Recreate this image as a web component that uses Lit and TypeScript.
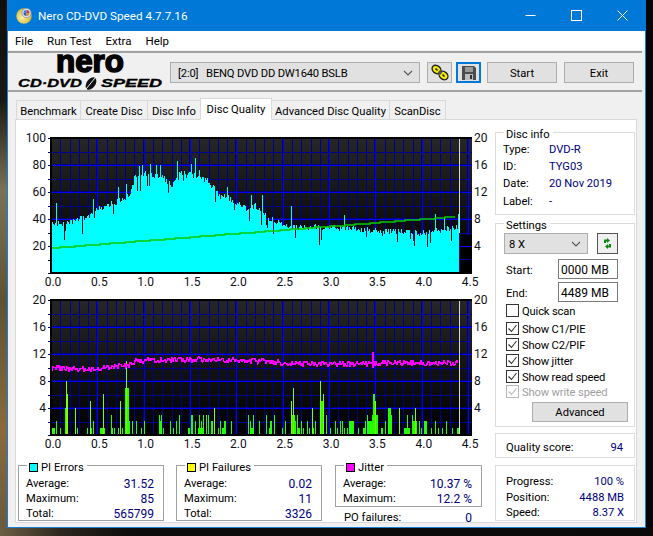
import { LitElement, html, css, svg } from "lit";
import { customElement } from "lit/decorators.js";

const env: [number, number][] = [[0,40],[.1,39],[.2,40],[.3,43],[.4,43],[.5,50],[.6,52],[.7,55],[.8,57],[.85,62],[.9,73],[1,76],[1.1,74],[1.2,73],[1.3,67],[1.37,76],[1.5,76],[1.6,73],[1.7,70],[1.8,60],[1.9,58],[2,55],[2.1,50],[2.2,52],[2.3,45],[2.4,41],[2.5,39],[2.6,36],[2.7,36],[3,36],[3.5,34],[4,32],[4.3,35],[4.4,37]];
const upSpikes: [number, number][] = [[56,52],[93,55],[108,51],[118,64],[126,66],[139,79],[142,80],[150,81],[156,80],[160,80],[177,83],[191,81],[195,85],[199,76],[227,64],[251,58],[262,58],[291,50],[344,43],[435,44],[444,41],[458,44]];
const piBars: [number, number, number][] = [[52,3,1],[56,1,2],[60,1,1],[65,3,4],[66,1,8],[67,1,6],[75,1,4],[77,1,1],[87,1,1],[90,1,5],[91,1,1],[93,1,2],[100,5,1],[103,1,6],[111,1,3],[112,1,1],[114,1,1],[118,1,1],[120,1,5],[122,1,1],[125,4,7],[126,1,11],[129,1,2],[132,1,2],[136,1,2],[141,1,1],[144,1,2],[159,1,3],[160,1,2],[161,1,3],[163,1,1],[170,1,2],[173,1,1],[176,1,2],[179,1,3],[188,2,1],[191,2,3],[195,1,2],[198,5,1],[199,1,3],[201,1,2],[203,1,3],[206,1,3],[208,1,3],[211,1,2],[212,1,2],[214,1,4],[218,1,1],[220,1,2],[222,2,1],[224,2,2],[231,1,2],[248,1,3],[250,1,2],[251,2,1],[253,1,3],[250,4,1],[259,1,2],[266,1,3],[269,1,1],[270,2,2],[274,1,3],[282,1,1],[285,1,2],[291,1,5],[292,3,3],[293,1,7],[294,2,2],[297,1,3],[298,2,1],[301,1,2],[303,1,1],[307,1,2],[309,1,1],[312,1,4],[313,1,1],[315,1,2],[320,4,5],[320,1,8],[323,1,6],[326,1,3],[330,1,1],[335,1,2],[337,1,1],[340,1,2],[342,1,2],[344,1,1],[347,1,1],[349,5,2],[358,1,1],[363,3,1],[365,1,2],[367,1,3],[368,4,2],[372,6,3],[373,2,6],[375,1,5],[381,2,1],[385,1,2],[388,3,4],[391,1,3],[399,1,4],[404,6,1],[407,1,3],[412,1,3],[413,4,2],[415,1,4],[419,1,2],[421,1,1],[424,3,2],[431,1,1],[435,1,2],[438,1,1],[442,1,1],[446,1,2],[452,1,1],[457,2,1]];

function rng(seed: number) {
  let s = seed;
  return () => { s = (s * 1664525 + 1013904223) >>> 0; return s / 4294967296; };
}
function envAt(p: number) {
  for (let i = 1; i < env.length; i++) {
    if (p <= env[i][0]) {
      const [a, b] = env[i - 1], [c, d] = env[i];
      return b + ((d - b) * (p - a)) / (c - a);
    }
  }
  return env[env.length - 1][1];
}

const X0 = 51, PX = 92.7;
const fmtX = ["0.0","0.5","1.0","1.5","2.0","2.5","3.0","3.5","4.0","4.5"];
const MAJOR = "#0000ff", SHADE = "#000078", MINOR = "#000090";

function frame(id: string, top: number) {
  const lines = [];
  for (let i = 0; i <= 45; i++) {
    const x = Math.round(X0 + (i * PX) / 10);
    const major = i % 5 === 0;
    lines.push(svg`<rect x=${x} y=${top} width="1" height="135" fill=${major ? MAJOR : MINOR}></rect>`);
    if (major) lines.push(svg`<rect x=${x - 1} y=${top} width="1" height="135" fill=${SHADE}></rect>`);
  }
  for (let i = 0; i <= 10; i++) {
    const y = Math.round(top + i * 13.5);
    const major = i % 2 === 0;
    lines.push(svg`<rect x=${X0} y=${y} width="421" height="1" fill=${major ? MAJOR : MINOR}></rect>`);
    if (major) lines.push(svg`<rect x=${X0} y=${y - 1} width="421" height="1" fill=${SHADE}></rect>`);
    lines.push(svg`<rect x="48" y=${y} width="3" height="1" fill="#000080"></rect>`);
  }
  return svg`
    <defs><linearGradient id=${id} x1="0" y1="0" x2="0" y2="1"><stop offset="0" stop-color="#262626"></stop><stop offset="1" stop-color="#000"></stop></linearGradient></defs>
    <rect x=${X0} y=${top} width="421" height="135" fill=${`url(#${id})`}></rect>
    ${lines}`;
}
function axes(top: number, left: string[], right: string[]) {
  const bot = top + 135;
  return svg`
    <rect x="50" y=${top - 1} width="422" height="2" fill="#000"></rect>
    <rect x="50" y=${top} width="2" height="136" fill="#000"></rect>
    <rect x="50" y=${bot - 1} width="422" height="2" fill="#000"></rect>
    ${left.map((t, i) => svg`<text class="ax" x="46" y=${top + i * 27 + 4} text-anchor="end">${t}</text>`)}
    ${right.map((t, i) => svg`<text class="ax" x="474" y=${top + i * 27 + 4}>${t}</text>`)}
    ${fmtX.map((t, i) => svg`<text class="ax" x=${X0 + i * 46.35 + 2} y=${bot + 12.5} text-anchor="middle">${t}</text>`)}`;
}

function topChart() {
  const r = rng(71);
  const top = 139, bot = 274, k = 1.35;
  let d = "";
  for (let x = X0; x < 459; x++) {
    const p = (x - X0) / PX;
    let v = envAt(p) - r() * 4.5;
    if (r() < 0.09) v -= 4 + r() * 9;
    d += `M${x} ${bot}V${(bot - v * k).toFixed(1)}`;
  }
  for (const [x, v] of upSpikes) d += `M${x} ${bot}V${bot - v * k}`;
  let g = `M51 ${(bot - 18.5 * k).toFixed(0)}`;
  for (let x = 55; x <= 459; x += 5) {
    const v = 18.5 + ((x - X0) / 408) * 23.5;
    g += `H${x}V${(bot - v * k).toFixed(0)}`;
  }
  return svg`<svg class="chart top" viewBox="16 127 479 170" width="479" height="170" shape-rendering="crispEdges">
    ${frame("ga", top)}
    <path d=${d} stroke="#00ffff" stroke-width="1" fill="none" transform="translate(0.5 0)"></path>
    <rect x="460" y="236" width="12" height="38" fill="#000"></rect>
    <rect x="460" y="247" width="12" height="1" fill="#0000ff"></rect>
    <rect x="460" y="260" width="12" height="1" fill="#000090"></rect>
    <rect x="459" y=${top} width="1" height="95" fill="#d8d8d8"></rect>
    <path d=${g} stroke="#00cc00" stroke-width="1.4" fill="none" shape-rendering="auto"></path>
    ${axes(top, ["100","80","60","40","20"], ["20","16","12","8","4"])}
  </svg>`;
}
function bottomChart() {
  const r = rng(2024);
  const top = 301, bot = 436, k = 6.75;
  const base = (x: number) => {
    const pts = [[52,9.9],[90,9.7],[120,10.2],[130,10.3],[135,11],[200,11.2],[250,11],[300,10.5],[340,10.5],[400,10.7],[459,10.7]];
    for (let i = 1; i < pts.length; i++) if (x <= pts[i][0]) {
      const [a, b] = pts[i - 1], [c, e] = pts[i];
      return b + ((e - b) * (x - a)) / (c - a);
    }
    return 10.7;
  };
  let m = "";
  for (let x = 52; x <= 458; x += 1) {
    const v = base(x) + (r() - 0.5) * 0.8;
    m += `${m ? "L" : "M"}${x} ${(bot - v * k).toFixed(1)}`;
    if (x === 373) m += `L373 ${bot - 12.2 * k}L373 ${bot - 10 * k}`;
  }
  const bars = piBars.map(([x, w, v]) => svg`<rect x=${x} y=${bot - Math.round(v * k)} width=${w} height=${Math.round(v * k)} fill=${w === 1 && v > 3 ? "#7cff00" : "#22ff00"}></rect>`);
  return svg`<svg class="chart" viewBox="16 297 479 158" width="479" height="158" shape-rendering="crispEdges">
    ${frame("gb", top)}
    ${bars}
    <path d=${m} stroke="#ff00ff" stroke-width="1.6" fill="none" stroke-linejoin="round"></path>
    <rect x="459" y=${top} width="1" height="135" fill="#d8d8d8"></rect>
    ${axes(top, ["20","16","12","8","4"], ["20","16","12","8","4"])}
  </svg>`;
}

const chevron = svg`<svg class="chev" width="10" height="6" viewBox="0 0 10 6"><path d="M1 1l4 4 4-4" fill="none" stroke="#555" stroke-width="1.1"></path></svg>`;

@customElement("app-root")
export class AppRoot extends LitElement {
  static styles = css`
    :host {
      display: block; width: 653px; height: 536px; overflow: hidden; position: relative;
      font-family: Roboto, "Open Sans", sans-serif; font-size: 11.2px; color: #000;
      background:
        linear-gradient(to right, #6d5f45 0, #2c281f 60px, #0c0c0c 130px, #0a0a0a 100%) 0 527px / 100% 9px no-repeat,
        linear-gradient(to bottom, #0e0e0c 0, #1a1a14 100px, #7a7258 190px, #5d5236 300px, #8a6a3c 430px, #6a5a40 527px) 0 0 / 7px 100% no-repeat,
        #060608;
    }
    .window { margin-left: 7px; width: 639px; height: 528px; box-sizing: border-box; background: #f0f0f0; border: solid #1c7fd6; border-width: 0 1px 1px 1px; display: flex; flex-direction: column; }
    .title { height: 31px; margin: 0 -1px; background: #0078d7; color: #fff; display: flex; align-items: center; font-size: 11.7px; flex: none; padding-right: 1px; }
    .title .ico { margin-left: 9px; margin-right: 5px; }
    .title .cap { flex: 1; }
    .winbtn { width: 46px; display: flex; justify-content: center; }
    .menu { height: 19px; background: #fff; display: flex; align-items: center; padding-left: 7px; flex: none; font-size: 11.5px; }
    .menu span { margin-right: 14px; }
    .toolbar { flex: none; margin: 1px 3px 0 0; border: solid #a2a2a2; border-width: 2px 0; padding-top: 9px; display: flex; align-items: flex-start; height: 28px; }
    .logo { margin-top: -9px; width: 162px; height: 37px; flex: none; overflow: visible; }
    .logo text { font-family: "Liberation Sans", sans-serif; font-weight: 700; }
    .btn { box-sizing: border-box; height: 21px; background: #e1e1e1; border: 1px solid #adadad; display: flex; align-items: center; justify-content: center; flex: none; }
    .txt { padding-top: 1px; }
    .combo { width: 250px; justify-content: space-between; padding: 0 6px 0 7px; margin-right: 7px; }
    .combo b { font-weight: 400; font-size: 11.2px; letter-spacing: -0.18px; padding-top: 1px; white-space: pre; }
    .gold { width: 25px; margin-right: 4px; }
    .disk { width: 25px; margin-right: 6px; border: 2px solid #0078d7; }
    .big { width: 70px; margin-right: 7px; }
    .tabs { flex: none; margin: 8px 0 0 8px; display: grid; grid-template-columns: 65px 67px 53px 71px 118px 56px; width: max-content; height: 20px; position: relative; z-index: 1; }
    .tab { box-sizing: border-box; height: 20px; padding-top: 3px; display: flex; align-items: center; justify-content: center; border: 1px solid #d9d9d9; border-left-width: 0; background: #f0f0f0; white-space: nowrap; }
    .tab:first-child { border-left-width: 1px; }
    .tab.on { background: #fff; height: 22px; margin-top: -2px; border-left-width: 1px; margin-left: -1px; border-bottom-color: #fff; padding-top: 1px; }
    .pane { box-sizing: border-box; margin-left: 7px; width: 622px; height: 404px; margin-top: -1px; background: #fff; border: 1px solid #d9d9d9; display: flex; }
    .left { width: 479px; flex: none; padding-top: 6px; }
    .chart { display: block; overflow: visible; }
    .ax { font-family: Roboto, "Open Sans", sans-serif; font-size: 12px; fill: #101018; }
    .stats { display: flex; gap: 12px; margin: 11px 0 0 2px; }
    .box { box-sizing: border-box; position: relative; border: 1px solid #a0a0a0; }
    .box > .lg { position: absolute; top: -7px; left: 8px; background: #fff; padding: 0 3px 0 2px; display: flex; align-items: center; gap: 3px; height: 16px; }
    .sw { width: 7px; height: 7px; border: 1px solid #000; display: inline-block; }
    .stat { width: 146px; height: 56px; padding: 9px 9px 0 7px; }
    .stat .v { font-size: 12px; }
    .jcol { width: 147px; margin-left: 1px; }
    .jcol .stat { width: 147px; height: 42px; }
    .po { margin-top: 2px; }
    .po .v { font-size: 12px; }
    .row { box-sizing: border-box; display: flex; justify-content: space-between; align-items: center; height: 15px; padding-top: 2px; white-space: nowrap; }
    .po.row { padding: 2px 10px 0 9px; }
    .v { color: #000080; }
    .right { width: 140px; flex: none; padding-top: 12px; }
    .pbox { border-color: #dcdcdc; }
    .info { height: 83px; padding: 6px 0 0 7px; }
    .info .line { box-sizing: border-box; display: grid; grid-template-columns: 46px 1fr; height: 17.4px; padding-top: 3px; align-items: center; }
    .settings { height: 204px; margin-top: 8px; padding: 9px 0 0 8px; }
    .sel { display: flex; gap: 9px; }
    .sel .btn { width: 84px; justify-content: space-between; padding: 0 6px 0 4px; }
    .refresh { box-sizing: border-box; width: 21px; height: 21px; background: #f0f0f0; border: 1px solid #555; display: flex; align-items: center; justify-content: center; }
    .field { box-sizing: border-box; display: grid; grid-template-columns: 52px 60px; margin-left: 2px; align-items: center; height: 20px; margin-top: 3px; }
    .field.first { margin-top: 5px; }
    .field span { padding-top: 2px; }
    .inp { box-sizing: border-box; height: 20px; border: 1px solid #7a7a7a; padding: 1px 0 0 2px; display: flex; align-items: center; font-size: 12px; }
    .cb { display: flex; align-items: center; gap: 3px; height: 15.75px; margin-left: 2px; white-space: nowrap; letter-spacing: -0.15px; }
    .cb span { padding-top: 2px; }
    .cb.quick { height: 16px; margin-bottom: 3px; margin-top: 0; }
    .cb i { width: 11px; height: 11px; border: 1px solid #333; display: flex; flex: none; background: #fff; }
    .cb.off { color: #a0a0a0; }
    .cb.off i { border-color: #b8b8b8; }
    .adv { width: 96px; height: 20px; margin: 2px 0 0 28px; padding-top: 2px; }
    .quality { height: 25px; margin-top: 6px; padding: 3px 11px 0 10px; display: flex; align-items: center; justify-content: space-between; }
    .prog { height: 56px; margin-top: 7px; padding: 7px 10px 0 10px; }
    .prog .row { height: 15.5px; }
  `;

  private stat(label: string, swatch: string, rows: [string, string][]) {
    return html`<div class="box stat"><span class="lg"><span class="sw" style="background:${swatch}"></span>${label}</span>
      ${rows.map(([a, b]) => html`<div class="row"><span>${a}</span><span class="v">${b}</span></div>`)}</div>`;
  }
  private check(label: string, cls = "", on = true) {
    return html`<div class="cb ${cls}"><i>${on ? svg`<svg width="11" height="11" viewBox="0 0 11 11"><path d="M1.5 5.5l3 3 5-6.5" fill="none" stroke=${cls === "off" ? "#b8b8b8" : "#333"} stroke-width="1.1"></path></svg>` : ""}</i><span>${label}</span></div>`;
  }

  render() {
    const tabs = ["Benchmark", "Create Disc", "Disc Info", "Disc Quality", "Advanced Disc Quality", "ScanDisc"];
    return html`<div class="window">
      <div class="title">
        <svg class="ico" width="17" height="17" viewBox="0 0 17 17">
          <defs><radialGradient id="cd" cx=".4" cy=".6" r=".7"><stop offset="0" stop-color="#fff3a0"></stop><stop offset="1" stop-color="#c9a820"></stop></radialGradient></defs>
          <circle cx="8" cy="9" r="7.7" fill="url(#cd)"></circle>
          <circle cx="10.5" cy="6" r="4.6" fill="#dfe4ee" stroke="#8893a8" stroke-width=".8"></circle>
          <path d="M10.5 3v3h3a3 3 0 0 0-3-3z" fill="#d33"></path><path d="M10.5 9V6h-3a3 3 0 0 0 3 3z" fill="#2a62c8"></path><path d="M7.5 6h3V3a3 3 0 0 0-3 3z" fill="#3a7fe0"></path><path d="M13.5 6h-3v3a3 3 0 0 0 3-3z" fill="#e08a2a"></path>
        </svg>
        <span class="cap">Nero CD-DVD Speed 4.7.7.16</span>
        <div class="winbtn"><svg width="11" height="11" viewBox="0 0 11 11"><path d="M.5 5.5h10" stroke="#fff" fill="none"></path></svg></div>
        <div class="winbtn"><svg width="11" height="11" viewBox="0 0 11 11"><rect x=".5" y=".5" width="10" height="10" stroke="#fff" fill="none"></rect></svg></div>
        <div class="winbtn"><svg width="11" height="11" viewBox="0 0 11 11"><path d="M.5 .5l10 10M10.5 .5l-10 10" stroke="#fff" fill="none"></path></svg></div>
      </div>
      <div class="menu"><span>File</span><span>Run Test</span><span>Extra</span><span>Help</span></div>
      <div class="toolbar">
        <svg class="logo" viewBox="8 53 162 37">
          <text x="56" y="71.5" font-size="31" textLength="68" lengthAdjust="spacingAndGlyphs" stroke="#000" stroke-width="1.6">nero</text>
          <text x="18" y="87" font-size="10.5" font-style="italic" textLength="64" lengthAdjust="spacingAndGlyphs" stroke="#000" stroke-width=".3">CD·DVD</text>
          <ellipse cx="91" cy="83.5" rx="4.4" ry="7" transform="rotate(35 91 83.5)" fill="#111"></ellipse>
          <path d="M86 89l9-11" stroke="#eee" stroke-width="1"></path>
          <text x="101" y="87" font-size="10.5" font-style="italic" textLength="61" lengthAdjust="spacingAndGlyphs" stroke="#000" stroke-width=".3">SPEED</text>
        </svg>
        <div class="btn combo"><b>[2:0]   BENQ DVD DD DW1640 BSLB</b>${chevron}</div>
        <div class="btn gold"><svg width="18" height="17" viewBox="0 0 18 17">
          <g fill="#f6ea00" stroke="#222" stroke-width="1.4"><ellipse cx="5.5" cy="5.5" rx="4.8" ry="3.8" transform="rotate(40 5.5 5.5)"></ellipse><ellipse cx="12.5" cy="11.5" rx="4.8" ry="3.8" transform="rotate(40 12.5 11.5)"></ellipse></g>
          <path d="M4.5 4.5l2 2M11.5 10.5l2 2" stroke="#222" stroke-width="1.6" fill="none"></path><path d="M7.5 7.5l3 2" stroke="#555" stroke-width="3"></path>
        </svg></div>
        <div class="btn disk"><svg width="14" height="14" viewBox="0 0 14 14"><path d="M0 0h12l2 2v12H0z" fill="#4c4c4c"></path><rect x="3" y="1" width="8" height="5" fill="#9a9a9a"></rect><rect x="3" y="8" width="8" height="6" fill="#bdbdbd"></rect><rect x="8" y="9" width="2" height="4" fill="#333"></rect></svg></div>
        <div class="btn big txt">Start</div>
        <div class="btn big txt">Exit</div>
      </div>
      <div class="tabs">${tabs.map((t) => html`<div class="tab ${t === "Disc Quality" ? "on" : ""}">${t}</div>`)}</div>
      <div class="pane">
        <div class="left">
          ${topChart()}
          ${bottomChart()}
          <div class="stats">
            ${this.stat("PI Errors", "#00ffff", [["Average:", "31.52"], ["Maximum:", "85"], ["Total:", "565799"]])}
            ${this.stat("PI Failures", "#ffff00", [["Average:", "0.02"], ["Maximum:", "11"], ["Total:", "3326"]])}
            <div class="jcol">
              ${this.stat("Jitter", "#ff00ff", [["Average:", "10.37 %"], ["Maximum:", "12.2 %"]])}
              <div class="row po"><span>PO failures:</span><span class="v">0</span></div>
            </div>
          </div>
        </div>
        <div class="right">
          <div class="box pbox info"><span class="lg">Disc info</span>
            <div class="line"><span>Type:</span><span class="v">DVD-R</span></div>
            <div class="line"><span>ID:</span><span class="v">TYG03</span></div>
            <div class="line"><span>Date:</span><span class="v">20 Nov 2019</span></div>
            <div class="line"><span>Label:</span><span class="v">-</span></div>
          </div>
          <div class="box pbox settings"><span class="lg">Settings</span>
            <div class="sel">
              <div class="btn"><span class="txt">8 X</span>${chevron}</div>
              <div class="refresh"><svg width="13" height="15" viewBox="0 0 13 15"><path d="M3 7V3.5h3V2l3 2.5L6 7V5.5H5V7zM10 8v3.5H7V13L4 10.5 7 8v1.5h1V8z" fill="#0a8a0a"></path></svg></div>
            </div>
            <div class="field first"><span>Start:</span><div class="inp">0000 MB</div></div>
            <div class="field"><span>End:</span><div class="inp">4489 MB</div></div>
            ${this.check("Quick scan", "quick", false)}
            ${this.check("Show C1/PIE")}
            ${this.check("Show C2/PIF")}
            ${this.check("Show jitter")}
            ${this.check("Show read speed")}
            ${this.check("Show write speed", "off")}
            <div class="btn adv">Advanced</div>
          </div>
          <div class="box pbox quality"><span>Quality score:</span><span class="v">94</span></div>
          <div class="box pbox prog">
            <div class="row"><span>Progress:</span><span class="v">100 %</span></div>
            <div class="row"><span>Position:</span><span class="v">4488 MB</span></div>
            <div class="row"><span>Speed:</span><span class="v">8.37 X</span></div>
          </div>
        </div>
      </div>
    </div>`;
  }
}
